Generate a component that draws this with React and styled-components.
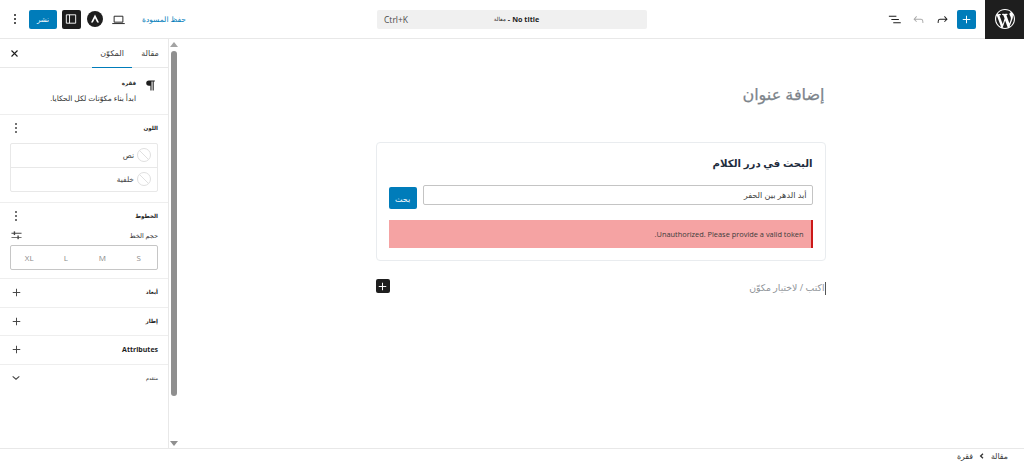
import React from "react";
import styled, { createGlobalStyle } from "styled-components";

const Global = createGlobalStyle`
  html, body { margin: 0; padding: 0; height: 100%; overflow: hidden; background: #fff; }
  #root { height: 100%; }
  * { box-sizing: border-box; }
  body { font-family: "Open Sans", "DejaVu Sans", sans-serif; color: #1e1e1e; }
`;

const Page = styled.div`
  height: 463px; width: 1024px; display: flex; flex-direction: column;
`;
const Header = styled.header`
  height: 39px; flex: none; display: flex; align-items: center; border-bottom: 1px solid #e8e8e8;
`;
const Logo = styled.div`
  width: 39px; height: 39px; background: #1e1e1e; display: flex; align-items: center; justify-content: center; color: #fff; flex: none;
`;
const HeaderStart = styled.div`
  width: 338px; display: flex; align-items: center; flex: none; padding-right: 9px;
`;
const IconBtn = styled.button`
  all: unset; width: ${p => p.$w || 24}px; height: 24px; display: flex; align-items: center; justify-content: center;
  color: ${p => p.$muted ? "#a9a9a9" : "#1e1e1e"}; flex: none;
`;
const AddBtn = styled.button`
  all: unset; width: 19px; height: 19px; border-radius: 2px; background: #007cba; color: #fff; display: flex; align-items: center; justify-content: center; flex: none; margin-left: 3px;
`;
const CommandWrap = styled.div`
  flex: none; width: 270px; height: 19px; background: #f0f0f0; border-radius: 2px; display: flex; align-items: center; position: relative; padding-left: 7px; font-size: 8.5px; color: #4a4a4a; direction: ltr;
`;
const CommandTitle = styled.div`
  position: absolute; left: 9px; right: 0; top: 0; bottom: 1px; display: flex; align-items: center; justify-content: center; direction: rtl; font-weight: 700; color: #1e1e1e; font-size: 7.2px; gap: 2px;
`;
const TitleKind = styled.span`
  font-weight: 400; font-size: 5.5px;
`;
const HeaderEnd = styled.div`
  flex: 1; display: flex; align-items: center; padding-left: 4px; justify-content: flex-start; direction: rtl;
`;
const SaveLink = styled.span`
  font-size: 7.5px; color: #007cba; margin-left: 11px; margin-right: 191px; white-space: nowrap; flex: none;
`;
const PublishBtn = styled.button`
  all: unset; width: 28px; height: 19px; background: #007cba; color: #fff; font-size: 7px; border-radius: 2px; text-align: center; line-height: 19px; flex: none; margin: 0 5px 0 4px;
`;
const SidebarToggle = styled.button`
  all: unset; width: 19px; height: 19px; background: #1e1e1e; color: #fff; border-radius: 2px; display: flex; align-items: center; justify-content: center; flex: none; margin-right: 2px;
`;
const Body = styled.div`
  flex: 1; min-height: 0; display: flex;
`;
const Canvas = styled.main`
  flex: 1; display: flex; flex-direction: column; align-items: center; padding-top: 41px; padding-right: 2px; min-width: 0;
`;
const Column = styled.div`
  width: 450px; display: flex; flex-direction: column;
`;
const PostTitle = styled.h1`
  margin: 0 0 31px; font-size: 16px; line-height: 28px; font-weight: 400; -webkit-text-stroke: 0.25px #7d848b; color: #7d848b; height: 31px; padding-right: 1px;
`;
const Card = styled.section`
  height: 119px; border: 1px solid #e9ecef; border-radius: 4px; padding: 12px 12px 0; display: flex; flex-direction: column;
`;
const CardTitle = styled.h2`
  margin: 0; font-size: 10.2px; line-height: 16px; font-weight: 700; color: #1f2d3d; height: 20px;
`;
const SearchRow = styled.div`
  display: flex; gap: 6px; margin-top: 10px; align-items: flex-start;
`;
const SearchInput = styled.div`
  flex: 1; height: 20px; border: 1px solid #c4c4c4; border-radius: 2px; font-size: 8.2px; line-height: 17px; padding: 0 5px; color: #444;
`;
const SearchBtn = styled.button`
  all: unset; width: 28px; height: 22px; margin-top: 2px; background: #007cba; color: #fff; border-radius: 2px; font-size: 8px; text-align: center; line-height: 21px;
`;
const ErrorBar = styled.div`
  margin-top: 11px; height: 28px; background: #f5a3a3; border-right: 2px solid #cc1818; padding-right: 7px; font-size: 7.4px; line-height: 28px; color: #3b3b3b;
`;
const Appender = styled.div`
  position: relative; height: 20px; margin-top: 17px; font-size: 9.3px; line-height: 20px; color: #8f9499;
`;
const Caret = styled.span`
  display: inline-block; width: 1px; height: 13px; background: #555; vertical-align: middle;
`;
const InserterBtn = styled.button`
  all: unset; position: absolute; left: 0; top: 1px; width: 14px; height: 14px; background: #1e1e1e; color: #fff; border-radius: 2px; display: flex; align-items: center; justify-content: center;
`;
const Scrollbar = styled.div`
  width: 10px; flex: none; display: flex; flex-direction: column; align-items: center; padding: 3px 0 2px;
`;
const Arrow = styled.span`
  width: 0; height: 0; border-left: 4px solid transparent; border-right: 4px solid transparent;
  ${p => p.$up ? "border-bottom: 5px solid #a3a3a3;" : "border-top: 5px solid #8f8f8f;"}
  flex: none;
`;
const Thumb = styled.div`
  width: 6px; height: 345px; margin-top: 4px; background: #8f8f8f; border-radius: 3px; flex: none;
`;
const ScrollSpacer = styled.div`
  flex: 1;
`;
const Sidebar = styled.aside`
  width: 169px; flex: none; border-right: 1px solid #e8e8e8; display: flex; flex-direction: column;
`;
const Tabs = styled.div`
  height: 29px; flex: none; display: flex; align-items: stretch; border-bottom: 1px solid #e8e8e8;
`;
const Tab = styled.div`
  width: ${p => p.$w}px; font-size: 8px; text-align: center; line-height: 27px; color: #3a3a3a; height: 29px;
  ${p => p.$active && "border-bottom: 1.5px solid #007cba;"}
`;
const CloseCell = styled.div`
  margin-right: auto; width: 29px; display: flex; align-items: center; justify-content: center; color: #1e1e1e;
`;
const BlockCard = styled.div`
  height: 47px; flex: none; border-bottom: 1px solid #eee; display: flex; padding: 10px 11px 0 0; gap: 7px;
`;
const ParaIcon = styled.div`
  width: 14px; height: 14px; flex: none; display: flex; align-items: center; justify-content: center; color: #1e1e1e;
`;
const BlockText = styled.div`
  display: flex; flex-direction: column; gap: 4px;
`;
const BlockName = styled.div`
  font-size: 5.5px; font-weight: 700; line-height: 10px;
`;
const BlockDesc = styled.div`
  font-size: 7.5px; line-height: 13px; color: #333;
`;
const Section = styled.section`
  flex: none; height: ${p => p.$h}px; border-bottom: ${p => p.$last ? "0" : "1px solid #eee"}; padding: 0 10px;
`;
const SectionHead = styled.div`
  height: 28px; padding-bottom: 2px; display: flex; align-items: center; justify-content: space-between;
`;
const SectionTitle = styled.h3`
  margin: 0; font-size: ${p => p.$latin ? 7 : p.$plain ? 4.8 : 5.6}px; font-weight: ${p => p.$plain ? 400 : 700}; line-height: 12px; color: #1e1e1e;
  ${p => p.$latin && "padding-top: 2px;"}
`;
const SectionIcon = styled.span`
  display: flex; width: 12px; justify-content: center; color: #444;
`;
const ColorGroup = styled.div`
  border: 1px solid #e8e8e8; border-radius: 2px; height: 49px; display: flex; flex-direction: column;
`;
const ColorRow = styled.div`
  flex: 1; display: flex; align-items: center; gap: 3px; padding-right: 6px; padding-bottom: 1px; font-size: 7.5px; color: #444;
  & + & { border-top: 1px solid #e8e8e8; }
`;
const Swatch = styled.span`
  width: 14px; height: 14px; border-radius: 50%; border: 1px solid #e0e0e0; flex: none;
  background: linear-gradient(45deg, transparent 47%, #e0e0e0 47%, #e0e0e0 53%, transparent 53%);
`;
const SizeHead = styled.div`
  display: flex; justify-content: space-between; align-items: center; font-size: 6.5px; height: 12px; margin-top: -2px; color: #333;
`;
const SizeGroup = styled.div`
  margin-top: 4px; height: 25px; border: 1px solid #c6c6c6; border-radius: 2px; display: grid; grid-template-columns: repeat(4, 1fr); align-items: center;
`;
const SizeItem = styled.span`
  text-align: center; font-size: 8px; color: #8a8a8a;
`;
const Footer = styled.footer`
  height: 15px; flex: none; border-top: 1px solid #e8e8e8; display: flex; align-items: center; gap: 6px; padding-right: 16px; font-size: 7.8px; color: #333;
`;

const Plus = ({ size = 9 }) => (
  <svg width={size} height={size} viewBox="0 0 24 24" fill="none" stroke="currentColor" strokeWidth="2.6">
    <path d="M12 2v20M2 12h20" />
  </svg>
);
const Kebab = () => (
  <svg width="4" height="12" viewBox="0 0 4 12" fill="currentColor">
    <circle cx="2" cy="2" r="1" /><circle cx="2" cy="6" r="1" /><circle cx="2" cy="10" r="1" />
  </svg>
);
const WpLogo = () => (
  <svg width="20" height="20" viewBox="0 0 20 20" fill="currentColor">
    <path d="M20 10c0-5.51-4.49-10-10-10C4.48 0 0 4.49 0 10c0 5.52 4.48 10 10 10 5.51 0 10-4.48 10-10zM7.78 15.37L4.37 6.22c.55-.02 1.17-.08 1.17-.08.5-.06.44-1.13-.06-1.11 0 0-1.45.11-2.37.11-.18 0-.37 0-.58-.01C4.12 2.69 6.87 1.11 10 1.11c2.33 0 4.45.87 6.05 2.34-.68-.11-1.65.39-1.65 1.58 0 .74.45 1.36.9 2.1.35.61.55 1.36.55 2.46 0 1.49-1.4 5-1.4 5l-3.03-8.37c.54-.02.82-.17.82-.17.5-.05.44-1.25-.06-1.22 0 0-1.44.12-2.38.12-.87 0-2.33-.12-2.33-.12-.5-.03-.56 1.2-.06 1.22l.92.08 1.26 3.41zM17.41 10c.24-.64.74-1.87.43-4.25.7 1.29 1.05 2.71 1.05 4.25 0 3.29-1.73 6.24-4.4 7.78.97-2.59 1.94-5.2 2.92-7.78zM6.1 18.09C3.12 16.65 1.11 13.53 1.11 10c0-1.3.23-2.48.72-3.59C3.25 10.3 4.67 14.2 6.1 18.09zm4.03-6.63l2.58 6.98c-.86.29-1.76.45-2.71.45-.79 0-1.57-.11-2.29-.33.81-2.38 1.62-4.74 2.42-7.1z" />
  </svg>
);
const Undo = () => (
  <svg width="15" height="15" viewBox="0 0 24 24" fill="currentColor">
    <path d="M18.3 11.7c-.6-.6-1.4-.9-2.3-.9H6.7l2.9-3.3-1.1-1-4.5 5L8.5 16l1-1-2.7-2.7H16c.5 0 .9.2 1.3.5 1 1 1 3.4 1 4.5v.3h1.5v-.2c0-1.5 0-4.3-1.5-5.7z" />
  </svg>
);
const Redo = () => (
  <svg width="15" height="15" viewBox="0 0 24 24" fill="currentColor">
    <path d="M15.6 6.5l-1.1 1 2.9 3.3H8c-.9 0-1.7.3-2.3.9-1.4 1.5-1.4 4.2-1.4 5.6v.2h1.5v-.3c0-1.1 0-3.5 1-4.5.3-.3.7-.5 1.3-.5h9.2L14.5 15l1.1 1.1 4.6-4.6-4.6-5z" />
  </svg>
);
const ListView = () => (
  <svg width="15" height="15" viewBox="0 0 24 24" fill="currentColor">
    <path d="M3 6h12v1.5H3zM7 11.25h12v1.5H7zM10 16.5h12V18H10z" />
  </svg>
);
const Laptop = () => (
  <svg width="15" height="15" viewBox="0 0 24 24" fill="none" stroke="currentColor" strokeWidth="1.5">
    <path d="M5 6.75h14v9.5H5zM2 18.5h20" />
  </svg>
);
const Avatar = () => (
  <svg width="16" height="16" viewBox="0 0 16 16">
    <circle cx="8" cy="8" r="8" fill="#1e1e1e" />
    <path d="M8 3.6 12 11.6H10.2L8 7.2 5.8 11.6H4z" fill="#fff" />
  </svg>
);
const SidebarIcon = () => (
  <svg width="14" height="14" viewBox="0 0 24 24" fill="none" stroke="currentColor" strokeWidth="1.6">
    <path d="M4 4.8h16v14.4H4zM9.5 4.8v14.4" />
  </svg>
);
const Close = () => (
  <svg width="9" height="9" viewBox="0 0 24 24" fill="none" stroke="currentColor" strokeWidth="3">
    <path d="M4 4l16 16M20 4 4 20" />
  </svg>
);
const Chevron = () => (
  <svg width="10" height="10" viewBox="0 0 24 24" fill="none" stroke="currentColor" strokeWidth="2.6">
    <path d="M4 8l8 7 8-7" />
  </svg>
);
const Sliders = () => (
  <svg width="11" height="11" viewBox="0 0 24 24" fill="currentColor">
    <path d="M1 6h22v2H1zM1 15h22v2H1z" /><rect x="6" y="3" width="3" height="8" /><rect x="14" y="12" width="3" height="8" />
  </svg>
);
const Paragraph = () => (
  <svg width="11" height="11" viewBox="0 0 14 14" fill="currentColor">
    <path d="M5 0.5h7.5v1.3h-1.4v11.7H9.7V1.8H8.3v11.7H6.9V7.4H5A3.45 3.45 0 0 1 5 .5z" />
  </svg>
);
const Crumb = () => (
  <svg width="6" height="6" viewBox="0 0 6 6" fill="none" stroke="currentColor" strokeWidth="1.3">
    <path d="M4 .8 1.6 3 4 5.2" />
  </svg>
);

const sizes = ["S", "M", "L", "XL"];
const panels = [
  { title: "أبعاد", h: 29 },
  { title: "إطار", h: 28 },
  { title: "Attributes", h: 29, latin: true },
];

export default function App() {
  return (
    <Page dir="rtl">
      <Global />
      <Header>
        <Logo><WpLogo /></Logo>
        <HeaderStart>
          <AddBtn><Plus size={9} /></AddBtn>
          <IconBtn><Redo /></IconBtn>
          <IconBtn $muted><Undo /></IconBtn>
          <IconBtn><ListView /></IconBtn>
        </HeaderStart>
        <CommandWrap>
          Ctrl+K
          <CommandTitle>No title <span>-</span> <TitleKind>مقالة</TitleKind></CommandTitle>
        </CommandWrap>
        <HeaderEnd>
          <SaveLink>حفظ المسودة</SaveLink>
          <IconBtn><Laptop /></IconBtn>
          <IconBtn><Avatar /></IconBtn>
          <SidebarToggle><SidebarIcon /></SidebarToggle>
          <PublishBtn>نشر</PublishBtn>
          <IconBtn $w={20}><Kebab /></IconBtn>
        </HeaderEnd>
      </Header>
      <Body>
        <Canvas>
          <Column>
            <PostTitle>إضافة عنوان</PostTitle>
            <Card>
              <CardTitle>البحث في درر الكلام</CardTitle>
              <SearchRow>
                <SearchInput>أبد الدهر بين الحفر</SearchInput>
                <SearchBtn>بحث</SearchBtn>
              </SearchRow>
              <ErrorBar>Unauthorized. Please provide a valid token.</ErrorBar>
            </Card>
            <Appender>
              <Caret />اكتب / لاختيار مكوّن
              <InserterBtn><Plus size={9} /></InserterBtn>
            </Appender>
          </Column>
        </Canvas>
        <Scrollbar>
          <Arrow $up />
          <Thumb />
          <ScrollSpacer />
          <Arrow />
        </Scrollbar>
        <Sidebar>
          <Tabs>
            <Tab $w={36}>مقالة</Tab>
            <Tab $w={40} $active>المكوّن</Tab>
            <CloseCell><Close /></CloseCell>
          </Tabs>
          <BlockCard>
            <ParaIcon><Paragraph /></ParaIcon>
            <BlockText>
              <BlockName>فقرة</BlockName>
              <BlockDesc>ابدأ بناء مكوّنات لكل الحكايا.</BlockDesc>
            </BlockText>
          </BlockCard>
          <Section $h={88}>
            <SectionHead>
              <SectionTitle>اللون</SectionTitle>
              <SectionIcon><Kebab /></SectionIcon>
            </SectionHead>
            <ColorGroup>
              <ColorRow><Swatch />نص</ColorRow>
              <ColorRow><Swatch />خلفية</ColorRow>
            </ColorGroup>
          </Section>
          <Section $h={76}>
            <SectionHead>
              <SectionTitle>الخطوط</SectionTitle>
              <SectionIcon><Kebab /></SectionIcon>
            </SectionHead>
            <SizeHead>
              <span>حجم الخط</span>
              <SectionIcon><Sliders /></SectionIcon>
            </SizeHead>
            <SizeGroup>
              {sizes.map(s => <SizeItem key={s}>{s}</SizeItem>)}
            </SizeGroup>
          </Section>
          {panels.map(p => (
            <Section key={p.title} $h={p.h}>
              <SectionHead>
                <SectionTitle $latin={p.latin}>{p.title}</SectionTitle>
                <SectionIcon><Plus /></SectionIcon>
              </SectionHead>
            </Section>
          ))}
          <Section $h={29} $last>
            <SectionHead>
              <SectionTitle $plain>متقدم</SectionTitle>
              <SectionIcon><Chevron /></SectionIcon>
            </SectionHead>
          </Section>
        </Sidebar>
      </Body>
      <Footer>
        <span>مقالة</span><Crumb /><span>فقرة</span>
      </Footer>
    </Page>
  );
}
